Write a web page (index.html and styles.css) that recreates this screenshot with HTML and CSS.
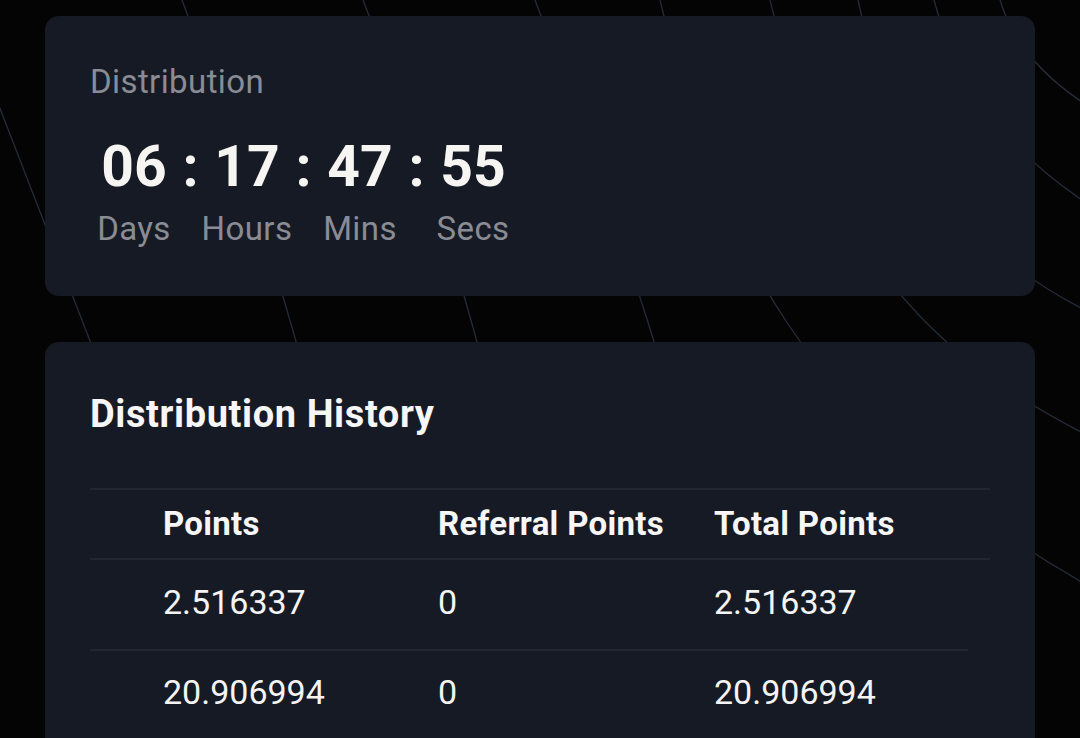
FILE: index.html
```html
<!DOCTYPE html>
<html lang="en">
<head>
<meta charset="utf-8">
<title>Distribution</title>
<link rel="stylesheet" href="styles.css">
</head>
<body>
<svg class="backdrop" width="1080" height="738" viewBox="0 0 1080 738" aria-hidden="true">
  <g fill="none" stroke="#262c3a" stroke-width="1.3">
    <path d="M -42 0 L 140 470"/>
    <path d="M 182 0 Q 262 210 312 400"/>
    <path d="M 363 0 Q 448 220 492 400"/>
    <path d="M 535 0 Q 615 210 672 400"/>
    <path d="M 660 0 C 720 250, 800 420, 1085 584"/>
    <path d="M 770 0 C 820 200, 880 330, 1085 434"/>
    <path d="M 858 0 Q 905 220 1085 310"/>
    <path d="M 934 0 Q 965 122 1085 202"/>
    <path d="M 1000 0 Q 1018 60 1085 104"/>
  </g>
</svg>

<main class="page">
  <section class="card countdown-card">
    <p class="card-label">Distribution</p>
    <div class="countdown">
      <span class="num">06</span>
      <span class="colon">:</span>
      <span class="num">17</span>
      <span class="colon">:</span>
      <span class="num">47</span>
      <span class="colon">:</span>
      <span class="num">55</span>
      <span class="unit">Days</span>
      <span class="unit unit-2">Hours</span>
      <span class="unit unit-3">Mins</span>
      <span class="unit unit-4">Secs</span>
    </div>
  </section>

  <section class="card history-card">
    <h2 class="card-title">Distribution History</h2>
    <div class="table">
      <div class="row head-row">
        <span></span>
        <span class="cell">Points</span>
        <span class="cell">Referral Points</span>
        <span class="cell">Total Points</span>
      </div>
      <div class="row body-row short">
        <span></span>
        <span class="cell">2.516337</span>
        <span class="cell">0</span>
        <span class="cell">2.516337</span>
      </div>
      <div class="row body-row last">
        <span></span>
        <span class="cell">20.906994</span>
        <span class="cell">0</span>
        <span class="cell">20.906994</span>
      </div>
    </div>
  </section>
</main>
</body>
</html>
```

FILE: styles.css
```css
* {
  box-sizing: border-box;
}

html, body {
  margin: 0;
  padding: 0;
}

body {
  background: #040404;
  color: #f4f4f4;
  font-family: Roboto, "Liberation Sans", sans-serif;
  width: 1080px;
  height: 738px;
  overflow: hidden;
  position: relative;
}

.backdrop {
  position: absolute;
  left: 0;
  top: 0;
  z-index: 0;
}

.page {
  position: relative;
  z-index: 1;
  padding: 16px 45px 0 45px;
  display: flex;
  flex-direction: column;
  gap: 46px;
}

.card {
  background: #161a25;
  border-radius: 14px;
  padding: 0 45px;
}

.countdown-card {
  padding-top: 47px;
  padding-bottom: 48px;
}

.card-label {
  margin: 0;
  font-size: 33px;
  line-height: 38px;
  letter-spacing: 0.4px;
  color: #8a8c95;
  font-weight: 400;
}

.countdown {
  margin-top: 32px;
  display: grid;
  grid-template-columns: 86px 27px 86px 27px 86px 27px 86px;
  grid-template-rows: 68px 38px;
  row-gap: 9px;
  justify-items: center;
  margin-left: 1px;
}

.num {
  font-size: 57px;
  line-height: 68px;
  font-weight: 700;
  color: #f6f5f2;
  white-space: nowrap;
}

.colon {
  font-size: 57px;
  line-height: 68px;
  font-weight: 700;
  color: #f6f5f2;
}

.unit {
  grid-row: 2;
  grid-column: 1;
  font-size: 33px;
  line-height: 38px;
  letter-spacing: 0.4px;
  color: #8a8c95;
  white-space: nowrap;
}

.unit-2 { grid-column: 3; }
.unit-3 { grid-column: 5; }
.unit-4 { grid-column: 7; }

.history-card {
  padding-top: 50px;
  height: 420px;
}

.card-title {
  margin: 0;
  font-size: 38px;
  line-height: 44px;
  letter-spacing: 0.6px;
  font-weight: 700;
  color: #f6f6f6;
}

.table {
  margin-top: 52px;
  border-top: 2px solid #212633;
}

.row {
  display: grid;
  grid-template-columns: 73px 275px 276px 1fr;
  border-bottom: 2px solid #212633;
}

.cell {
  white-space: nowrap;
}

.head-row {
  padding: 15px 0;
  font-size: 33px;
  line-height: 38px;
  letter-spacing: 0.3px;
  font-weight: 700;
  color: #f6f6f6;
}

.body-row {
  padding: 22px 0 27px;
  font-size: 34px;
  line-height: 40px;
  font-weight: 400;
  color: #f4f4f4;
}

.body-row.short {
  margin-right: 22px;
}

.body-row.last {
  border-bottom: none;
  padding-top: 21px;
}
```
